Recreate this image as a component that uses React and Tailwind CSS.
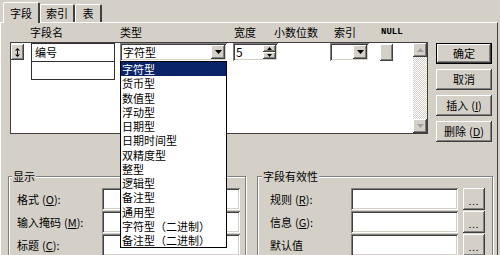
import React from "react";

// Windows classic 3D edges
const raised = "shadow-[inset_-1px_-1px_0_#404040,inset_1px_1px_0_#ffffff,inset_-2px_-2px_0_#808080,inset_2px_2px_0_#d4d0c8]";
const sunken = "shadow-[inset_1px_1px_0_#808080,inset_-1px_-1px_0_#ffffff,inset_2px_2px_0_#404040,inset_-2px_-2px_0_#d4d0c8]";

const tipe = [
  "字符型", "货币型", "数值型", "浮动型", "日期型", "日期时间型", "双精度型",
  "整型", "逻辑型", "备注型", "通用型", "字符型（二进制）", "备注型（二进制）",
];

function DownArrow({ color = "#000000" }) {
  return (
    <svg width="7" height="4" viewBox="0 0 7 4">
      <polygon points="0,0 7,0 3.5,4" fill={color} />
    </svg>
  );
}

function UpArrow({ color = "#000000" }) {
  return (
    <svg width="7" height="4" viewBox="0 0 7 4">
      <polygon points="0,4 7,4 3.5,0" fill={color} />
    </svg>
  );
}

function Tombol({ children, def }) {
  return (
    <div className={`w-[56px] h-[21px] flex items-center justify-center bg-[#d4d0c8] ${def ? "border border-black" : ""} ${raised}`}>
      {children}
    </div>
  );
}

function Label({ text, k }) {
  return (
    <span>
      {text}
      {k && (
        <span className="ml-[3px]">
          (<u>{k}</u>):
        </span>
      )}
    </span>
  );
}

export default function App() {
  return (
    <div className="relative w-[500px] h-[255px] overflow-hidden bg-[#d4d0c8] text-[11px] text-black font-['Noto_Sans_CJK_SC','Liberation_Sans',sans-serif]">
      {/* tab bar */}
      <div className="flex items-end h-[22px] pl-[3px]">
        <div className="relative z-10 -mb-[1px] w-[37px] h-[21px] flex items-center justify-center bg-[#d4d0c8] border-t border-l border-white border-r-2 border-r-[#404040] rounded-t-[2px]">
          字段
        </div>
        <div className="w-[35px] h-[18px] flex items-center justify-center border-t border-l border-white border-r-2 border-r-[#404040] rounded-t-[2px]">
          索引
        </div>
        <div className="w-[27px] h-[18px] flex items-center justify-center border-t border-l border-white border-r-2 border-r-[#404040] rounded-t-[2px]">
          表
        </div>
      </div>

      {/* panel */}
      <div className="w-[498px] h-[233px] border-t border-l border-white border-r border-r-[#404040]">
        {/* column headers */}
        <div className="flex items-center h-[19px] pl-[29px]">
          <div className="w-[90px]">字段名</div>
          <div className="w-[114px]">类型</div>
          <div className="w-[40px]">宽度</div>
          <div className="w-[60px]">小数位数</div>
          <div className="w-[47px]">索引</div>
          <div className="font-['Liberation_Mono',monospace] text-[9px] font-bold">NULL</div>
        </div>

        <div className="flex items-start pl-[9px]">
          {/* grid */}
          <div className="w-[418px] h-[92px] border border-[#404040] bg-white flex items-start">
            <div className={`mt-[1px] w-[13px] h-[16px] flex items-center justify-center bg-[#d4d0c8] ${raised}`}>
              <svg width="5" height="9" viewBox="0 0 5 9">
                <polygon points="2.5,0 5,2.5 0,2.5" fill="#000" />
                <rect x="2" y="2.5" width="1" height="4" fill="#000" />
                <polygon points="0,6.5 5,6.5 2.5,9" fill="#000" />
              </svg>
            </div>
            <div className="ml-[7px] w-[84px] flex flex-col">
              <div className="h-[19px] border border-[#303030] pl-[3px] leading-[16px]">编号</div>
              <div className="h-[19px] -mt-[1px] border border-[#303030]"></div>
            </div>
            <div className={`ml-[5px] w-[107px] h-[18px] flex items-center bg-white ${sunken}`}>
              <div className="flex-1 pl-[3px] leading-[16px]">字符型</div>
              <div className={`w-[14px] h-[14px] mr-[2px] flex items-center justify-center bg-[#d4d0c8] ${raised}`}>
                <DownArrow />
              </div>
            </div>
            <div className={`ml-[6px] w-[45px] h-[18px] flex items-center bg-white ${sunken}`}>
              <div className="flex-1 pl-[3px] leading-[16px] text-[12px]">5</div>
              <div className="w-[13px] h-[14px] mr-[2px] flex flex-col">
                <div className={`h-[7px] flex items-center justify-center bg-[#d4d0c8] ${raised}`}>
                  <svg width="5" height="3" viewBox="0 0 5 3"><polygon points="0,3 5,3 2.5,0" fill="#000" /></svg>
                </div>
                <div className={`h-[7px] flex items-center justify-center bg-[#d4d0c8] ${raised}`}>
                  <svg width="5" height="3" viewBox="0 0 5 3"><polygon points="0,0 5,0 2.5,3" fill="#000" /></svg>
                </div>
              </div>
            </div>
            <div className={`ml-[52px] w-[39px] h-[18px] flex items-center bg-white ${sunken}`}>
              <div className="flex-1"></div>
              <div className={`w-[14px] h-[14px] mr-[2px] flex items-center justify-center bg-[#d4d0c8] ${raised}`}>
                <DownArrow />
              </div>
            </div>
            <div className={`ml-[11px] mt-[1px] w-[13px] h-[17px] bg-[#d4d0c8] ${raised}`}></div>
            {/* scrollbar */}
            <div className="ml-auto w-[14px] h-full flex flex-col">
              <div className={`h-[14px] flex items-center justify-center bg-[#d4d0c8] ${raised}`}>
                <UpArrow color="#a0a0a0" />
              </div>
              <div className="flex-1 bg-[repeating-conic-gradient(#d4d0c8_0_25%,#ffffff_0_50%)] bg-[length:2px_2px]"></div>
              <div className={`h-[14px] flex items-center justify-center bg-[#d4d0c8] ${raised}`}>
                <DownArrow color="#a0a0a0" />
              </div>
            </div>
          </div>

          {/* buttons */}
          <div className="ml-[8px] mt-[1px] flex flex-col gap-[5px]">
            <Tombol def>确定</Tombol>
            <Tombol>取消</Tombol>
            <Tombol>
              <span>插入<span className="ml-[3px]">(<u>I</u>)</span></span>
            </Tombol>
            <Tombol>
              <span>删除<span className="ml-[3px]">(<u>D</u>)</span></span>
            </Tombol>
          </div>
        </div>

        {/* bottom groups */}
        <div className="flex items-start">
          <div className="relative ml-[7px] mt-[34px] w-[238px] h-[83px] border border-[#808080] shadow-[inset_1px_1px_0_#ffffff,1px_1px_0_#ffffff] pt-[11px] pl-[8px]">
            <div className="absolute -top-[9px] left-[3px] px-[1px] bg-[#d4d0c8] leading-[16px]">显示</div>
            <div className="flex flex-col gap-[1px]">
              <div className="flex items-center h-[22px]">
                <div className="w-[85px]"><Label text="格式" k="O" /></div>
                <div className={`w-[138px] h-[22px] bg-white ${sunken}`}></div>
              </div>
              <div className="flex items-center h-[22px]">
                <div className="w-[85px]"><Label text="输入掩码" k="M" /></div>
                <div className={`w-[138px] h-[22px] bg-white ${sunken}`}></div>
              </div>
              <div className="flex items-center h-[22px]">
                <div className="w-[85px]"><Label text="标题" k="C" /></div>
                <div className={`w-[138px] h-[22px] bg-white ${sunken}`}></div>
              </div>
            </div>
          </div>

          <div className="relative ml-[11px] mt-[34px] w-[236px] h-[83px] border border-[#808080] shadow-[inset_1px_1px_0_#ffffff,1px_1px_0_#ffffff] pt-[11px] pl-[12px]">
            <div className="absolute -top-[9px] left-[4px] px-[1px] bg-[#d4d0c8] leading-[16px]">字段有效性</div>
            <div className="flex flex-col gap-[1px]">
              {[["规则", "R"], ["信息", "G"], ["默认值", null]].map(([t, k]) => (
                <div key={t} className="flex items-center h-[22px]">
                  <div className="w-[81px]"><Label text={t} k={k} /></div>
                  <div className={`w-[107px] h-[22px] bg-white ${sunken}`}></div>
                  <div className={`ml-[5px] w-[22px] h-[22px] flex items-end justify-center pb-[4px] bg-[#d4d0c8] text-[9px] leading-[8px] tracking-[1px] ${raised}`}>
                    ...
                  </div>
                </div>
              ))}
            </div>
          </div>
        </div>
      </div>

      {/* dropdown list of the type combo */}
      <div className="absolute z-20 left-[120px] top-[61px] w-[107px] h-[187px] border border-black bg-white">
        {tipe.map((t, i) => (
          <div
            key={i}
            className={`h-[14.25px] leading-[14.25px] pl-[1px] whitespace-nowrap ${i === 0 ? "bg-[#0a246a] text-white" : ""}`}
          >
            {t}
          </div>
        ))}
      </div>
    </div>
  );
}
